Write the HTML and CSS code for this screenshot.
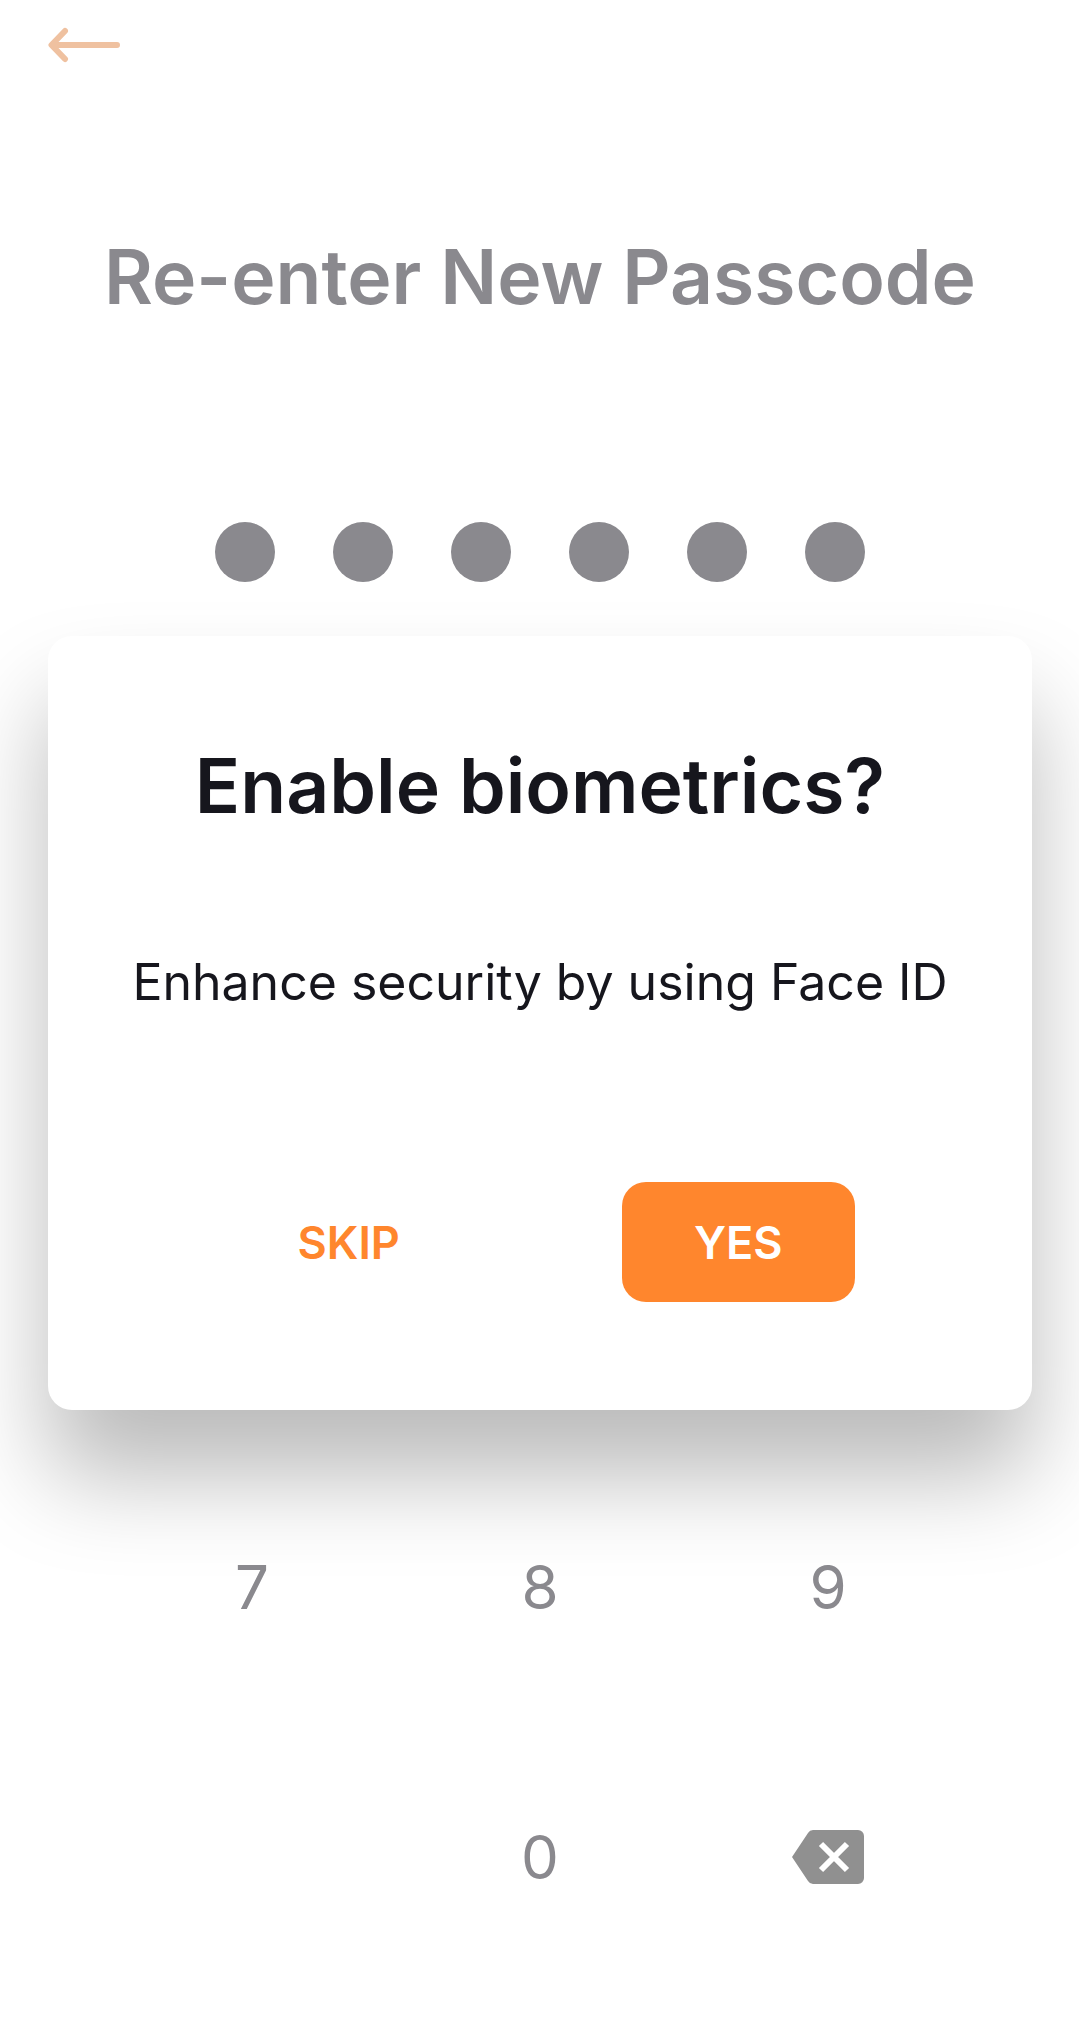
FILE: index.html
```html
<!DOCTYPE html>
<html lang="en">
<head>
<meta charset="utf-8">
<meta name="viewport" content="width=device-width, initial-scale=1">
<title>Re-enter New Passcode</title>
<link rel="stylesheet" href="styles.css">
</head>
<body>
<header class="topbar">
  <button class="back" type="button" aria-label="Back">
    <svg class="back-icon" viewBox="0 0 72 36" aria-hidden="true"><path d="M17 4 3.500 18 17 32M5 18H69"/></svg>
  </button>
</header>
<main class="screen">
  <h1 class="title">Re-enter New Passcode</h1>
  <div class="dots" role="img" aria-label="6 digits entered">
    <span class="dot"></span><span class="dot"></span><span class="dot"></span><span class="dot"></span><span class="dot"></span><span class="dot"></span>
  </div>
  <section class="dialog" role="dialog" aria-labelledby="dialog-title" aria-describedby="dialog-text">
    <h2 class="title dialog-title" id="dialog-title">Enable biometrics?</h2>
    <p class="dialog-text" id="dialog-text">Enhance security by using Face ID</p>
    <div class="actions">
      <button class="btn" type="button">SKIP</button>
      <button class="btn btn-primary" type="button">YES</button>
    </div>
  </section>
  <div class="keypad">
    <button class="key" type="button">7</button>
    <button class="key" type="button">8</button>
    <button class="key" type="button">9</button>
    <button class="key key-zero" type="button">0</button>
    <button class="key" type="button" aria-label="Delete">
      <svg class="delete-icon" viewBox="0 0 72 54" aria-hidden="true"><path class="delete-body" d="M21 0H66a6 6 0 0 1 6 6V48a6 6 0 0 1-6 6H21a6 6 0 0 1-5-3L0 27 16 3a6 6 0 0 1 5-3Z"/><path class="delete-cross" d="M29 14 55 40M55 14 29 40"/></svg>
    </button>
  </div>
</main>
</body>
</html>
```
FILE: styles.css
```css
* {
  box-sizing: border-box;
}

body {
  margin: 0;
  background: #fff;
  color: #16161d;
  font-family: Inter, "Open Sans", sans-serif;
}

button {
  border: 0;
  padding: 0;
  background: none;
  color: inherit;
  font: inherit;
  cursor: pointer;
}

.topbar {
  display: flex;
  padding: 27px 48px 0;
}

.back {
  display: flex;
}

.back-icon {
  width: 72px;
  height: 36px;
  fill: none;
  stroke: #efc1a0;
  stroke-width: 6;
  stroke-linecap: round;
  stroke-linejoin: round;
}

.screen {
  display: flex;
  flex-direction: column;
  padding: 160px 47px 40px 48px;
}

.title {
  margin: 0;
  color: #8a898e;
  font-size: 75px;
  font-weight: 600;
  line-height: 108px;
  text-align: center;
}

.dots {
  display: flex;
  justify-content: center;
  gap: 58px;
  margin-top: 191px;
}

.dot {
  width: 60px;
  height: 60px;
  border-radius: 50%;
  background: #8a898e;
}

.dialog {
  margin-top: 54px;
  padding: 96px 48px 108px;
  border-radius: 24px;
  background: #fff;
  box-shadow: 0 66px 96px rgba(0, 0, 0, 0.27);
}

.dialog-title {
  color: #16161d;
}

.dialog-text {
  margin: 106px 0 0;
  font-size: 50px;
  line-height: 72px;
  text-align: center;
}

.actions {
  display: flex;
  justify-content: center;
  gap: 150px;
  margin-top: 164px;
}

.btn {
  height: 120px;
  padding: 0 72px;
  border-radius: 24px;
  color: #ff862d;
  font-size: 45px;
  font-weight: 600;
}

.btn-primary {
  background: #ff862d;
  color: #fff;
}

.keypad {
  display: grid;
  grid-template-columns: repeat(3, 1fr);
  grid-auto-rows: 270px;
  margin: 42px 60px 0;
}

.key {
  display: flex;
  align-items: center;
  justify-content: center;
  color: #8a898e;
  font-size: 60px;
}

.key-zero {
  grid-column: 2;
}

.delete-icon {
  width: 72px;
  height: 54px;
}

.delete-body {
  fill: #909090;
}

.delete-cross {
  stroke: #fff;
  stroke-width: 6;
}
```
